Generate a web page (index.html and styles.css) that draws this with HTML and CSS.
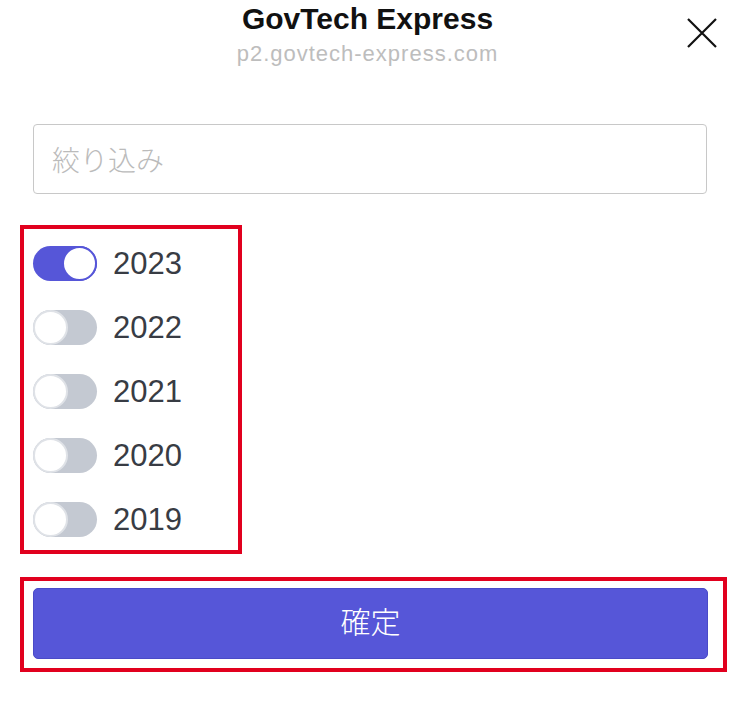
FILE: index.html
```html
<!DOCTYPE html>
<html lang="ja">
<head>
  <meta charset="UTF-8" />
  <meta name="viewport" content="width=device-width, initial-scale=1.0"/>
  <title>GovTech Express</title>
  <link rel="stylesheet" href="styles.css">
</head>
<body>
  <header class="sheet-header">
    <div class="sheet-title">
      <div class="site-name">GovTech Express</div>
      <div class="site-url">p2.govtech-express.com</div>
    </div>
    <button class="close-btn" aria-label="閉じる">
      <svg width="30" height="30" viewBox="0 0 30 30">
        <path d="M1 1 L29 29 M29 1 L1 29" stroke="#111" stroke-width="2.2" fill="none"/>
      </svg>
    </button>
  </header>

  <main class="filter-panel">
    <input class="filter-input" type="text" placeholder="絞り込み" />

    <div class="mark-box year-box">
      <label class="year-row">
        <input type="checkbox" checked />
        <span class="switch"></span>
        <span class="year-label">2023</span>
      </label>
      <label class="year-row">
        <input type="checkbox" />
        <span class="switch"></span>
        <span class="year-label">2022</span>
      </label>
      <label class="year-row">
        <input type="checkbox" />
        <span class="switch"></span>
        <span class="year-label">2021</span>
      </label>
      <label class="year-row">
        <input type="checkbox" />
        <span class="switch"></span>
        <span class="year-label">2020</span>
      </label>
      <label class="year-row">
        <input type="checkbox" />
        <span class="switch"></span>
        <span class="year-label">2019</span>
      </label>
    </div>

    <div class="mark-box submit-box">
      <button class="confirm-btn">確定</button>
    </div>
  </main>
</body>
</html>
```

FILE: styles.css
```css
body {
  margin: 0;
  background: #fff;
  font-family: 'Liberation Sans', Arial, 'Noto Sans CJK JP', sans-serif;
  width: 735px;
}
.sheet-header {
  display: grid;
  grid-template-columns: 1fr auto 1fr;
  align-items: start;
  height: 124px;
}
.sheet-title {
  grid-column: 2;
  text-align: center;
  padding-top: 2px;
}
.site-name {
  font-size: 30px;
  font-weight: 700;
  color: #111;
  line-height: 34px;
}
.site-url {
  font-size: 22px;
  letter-spacing: 1px;
  color: #bdbdbd;
  line-height: 26px;
  margin-top: 5px;
}
.close-btn {
  grid-column: 3;
  justify-self: end;
  margin: 18px 18px 0 0;
  padding: 0;
  border: none;
  background: none;
  width: 30px;
  height: 30px;
  display: flex;
}
.filter-panel {
  padding: 0 8px 0 20px;
  display: flex;
  flex-direction: column;
}
.filter-input {
  box-sizing: border-box;
  width: 674px;
  height: 70px;
  margin: 0 0 31px 13px;
  border: 1.5px solid #c8c8c8;
  border-radius: 4px;
  padding: 0 18px;
  font-size: 28px;
  font-family: 'Noto Sans CJK JP', sans-serif;
  font-weight: 300;
  outline: none;
}
.filter-input::placeholder { color: #bbb; }
.mark-box {
  border: 4px solid #e1001e;
  box-sizing: border-box;
}
.year-box {
  width: 222px;
  padding: 17px 0 13px 9px;
  display: flex;
  flex-direction: column;
  gap: 29px;
  margin-bottom: 23px;
}
.year-row {
  display: flex;
  align-items: center;
  gap: 16px;
  height: 35px;
}
.year-row input { display: none; }
.switch {
  position: relative;
  width: 64px;
  height: 35px;
  border-radius: 18px;
  background: #c4c9d2;
}
.switch::after {
  content: '';
  position: absolute;
  top: 0;
  left: 0;
  width: 31px;
  height: 31px;
  border-radius: 50%;
  background: #fff;
  border: 2px solid #dfe2e7;
}
.year-row input:checked + .switch { background: #5656d8; }
.year-row input:checked + .switch::after {
  left: 29px;
  border-color: #5656d8;
}
.year-label {
  font-size: 31px;
  color: #383c44;
}
.submit-box {
  width: 707px;
  padding: 7px 15px 9px 9px;
}
.confirm-btn {
  width: 100%;
  height: 71px;
  border: 1px solid #4a4ac8;
  border-radius: 5px;
  background: #5656d8;
  color: #fff;
  font-size: 30px;
  font-family: 'Noto Sans CJK JP', sans-serif;
  font-weight: 300;
  padding: 0 0 8px;
  display: block;
}
```
